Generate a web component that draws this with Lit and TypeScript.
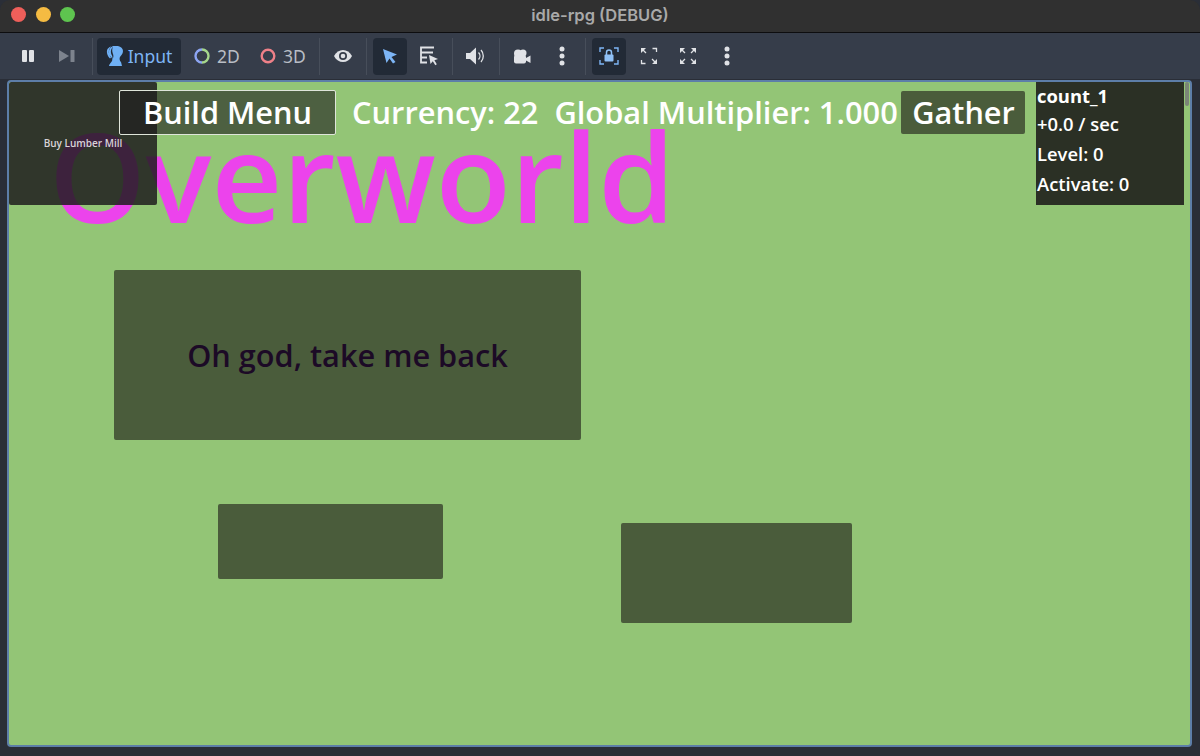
import { css, html, LitElement } from 'lit';
import { customElement } from 'lit/decorators.js';

@customElement('app-root')
export class AppRoot extends LitElement {
  static override styles = css`
    :host {
      display: block;
      width: 1200px;
      height: 756px;
      background: #2a2e37;
      overflow: hidden;
      font-family: 'Noto Sans', sans-serif;
    }
    .window {
      display: flex;
      flex-direction: column;
      height: 756px;
      border-radius: 10px 10px 0 0;
      overflow: hidden;
    }
    .titlebar {
      position: relative;
      flex: none;
      height: 32px;
      background: #303030;
      border-bottom: 1px solid #0d0d0f;
      display: flex;
      align-items: center;
      justify-content: center;
    }
    .lights {
      position: absolute;
      left: 11px;
      top: 7px;
      display: flex;
      gap: 9.5px;
    }
    .light {
      width: 15px;
      height: 15px;
      border-radius: 50%;
    }
    .red { background: #ee5f5a; }
    .yellow { background: #f5bb42; }
    .green { background: #5ec44f; }
    .title {
      font-family: Inter, 'Liberation Sans', sans-serif;
      font-size: 16.5px;
      font-weight: 600;
      color: #a9a9a9;
      margin-top: -3px;
    }
    .toolbar {
      flex: none;
      height: 46px;
      background: #363d4a;
      display: flex;
      align-items: center;
      padding-left: 9px;
      box-sizing: border-box;
    }
    .tool {
      flex: none;
      height: 37px;
      display: flex;
      align-items: center;
      justify-content: center;
      gap: 6px;
      border-radius: 4px;
      font-size: 17.5px;
      color: #b9bdc5;
    }
    .tool.on { background: #222a36; }
    .tool.blue { color: #7db5f5; }
    .tool svg { display: block; }
    .sep {
      flex: none;
      width: 1px;
      height: 37px;
      background: #474e5a;
    }
    .viewport-wrap {
      flex: 1;
      padding: 1px 8px 8px 7px;
      min-height: 0;
    }
    .viewport {
      position: relative;
      height: 663px;
      background: #93c576;
      border: 2px solid #5d7ea8;
      border-radius: 4px;
      overflow: hidden;
      font-family: 'Open Sans', 'Noto Sans', sans-serif;
      font-weight: 600;
    }
    /* game nodes sit on a free canvas, so they keep their own coordinates */
    .node {
      position: absolute;
      box-sizing: border-box;
    }
    .overworld {
      left: 40px;
      top: 11px;
      font-size: 123px;
      line-height: 165px;
      color: #ec43ec;
      white-space: nowrap;
    }
    .block {
      background: #4a5c3b;
      border-radius: 2px;
    }
    .back {
      display: flex;
      align-items: center;
      justify-content: center;
      font-size: 30.7px;
      color: #1c0a26;
    }
    .panel {
      background: rgba(30, 28, 30, 0.85);
      border-radius: 2px;
    }
    .buy {
      left: 0;
      top: 0;
      width: 148px;
      height: 123px;
      color: #d8d4d8;
      font-size: 10px;
      text-align: center;
      line-height: 14px;
      padding-top: 54px;
    }
    .btn {
      display: flex;
      align-items: center;
      justify-content: center;
      color: #fff;
      font-size: 30.7px;
      padding-bottom: 1px;
      background: rgba(30, 28, 30, 0.6);
      border-radius: 2px;
    }
    .build {
      left: 110px;
      top: 8px;
      width: 217px;
      height: 45px;
      border: 1.5px solid #dfe5da;
    }
    .gather {
      left: 892px;
      top: 9px;
      width: 124px;
      height: 43px;
      padding-left: 1px;
      background: #4a5c3b;
    }
    .label {
      left: 343px;
      top: 9px;
      font-size: 30.8px;
      line-height: 43px;
      color: #fff;
      white-space: pre;
    }
    .stats {
      left: 1027px;
      top: 0;
      width: 148px;
      height: 123px;
      background: #2b3025;
      color: #fff;
      font-size: 18.4px;
      line-height: 30px;
      padding-left: 1px;
    }
    .stats b { font-weight: 700; line-height: 27px; display: block; }
    .stats div { white-space: nowrap; }
    .scroll {
      position: absolute;
      right: 1px;
      top: 0;
      width: 4px;
      height: 24px;
      background: #7b8578;
      border-radius: 2px;
    }
  `;

  override render() {
    return html`
      <div class="window">
        <div class="titlebar">
          <div class="lights">
            <span class="light red"></span><span class="light yellow"></span><span class="light green"></span>
          </div>
          <div class="title">idle-rpg (DEBUG)</div>
        </div>
        <div class="toolbar">
          <div class="tool" style="width:38px">
            <svg width="14" height="14" viewBox="0 0 14 14" fill="#e0e2e6"><rect x="1" y="1" width="5" height="12" rx="1"/><rect x="8" y="1" width="5" height="12" rx="1"/></svg>
          </div>
          <div class="tool" style="width:40px">
            <svg width="16" height="14" viewBox="0 0 16 14" fill="#7d838d"><path d="M0 1l10 6-10 6z"/><rect x="11.500" y="1" width="4" height="12" rx="0.5"/></svg>
          </div>
          <div class="sep" style="margin:0 4px 0 5px"></div>
          <div class="tool on blue" style="width:84px;gap:5px">
            <svg width="17" height="20" viewBox="0 0 17 20" fill="#6fb0f5"><path d="M7 0c5-1 10 1 10 5 0 3-2 4-3 6-1 2 0 4 1 5l1 4H3c0-2 2-3 3-5 1-3-1-4-3-6C2 5 4 1 7 0z"/><path d="M1.500 3C3 1.500 4 .5 5 .5 3 3 2 6 3.500 9l1.500 2.500-1 1C1.500 10 0 6 1.500 3z"/><path d="M7 .5C5 3 4 6 6 9.500c.5 1 .5 2.500.2 4C8 11 7.500 9 6.800 7.500 6 5 6 3 7 .5z" fill="#222a36"/></svg>
            <span>Input</span>
          </div>
          <div class="tool" style="width:60px;margin-left:6px;gap:7px">
            <svg width="16" height="16" viewBox="0 0 16 16" fill="none" stroke-width="2.400"><path d="M8 1.500a6.500 6.500 0 0 1 0 13" stroke="#a5d68b"/><path d="M8 14.500a6.500 6.500 0 0 1 0-13" stroke="#8da5f3"/></svg>
            <span>2D</span>
          </div>
          <div class="tool" style="width:60px;margin-left:6px;gap:7px">
            <svg width="16" height="16" viewBox="0 0 16 16" fill="none"><circle cx="8" cy="8" r="6.300" stroke="#ee8088" stroke-width="2.400"/></svg>
            <span>3D</span>
          </div>
          <div class="sep" style="margin:0 3px 0 6px"></div>
          <div class="tool" style="width:40px">
            <svg width="20" height="14" viewBox="0 0 20 14"><path d="M1 7c2-4 5.500-6 9-6s7 2 9 6c-2 4-5.500 6-9 6s-7-2-9-6z" fill="#e0e2e6"/><circle cx="10" cy="7" r="4" fill="#363d4a"/><circle cx="10" cy="7" r="2.300" fill="#e0e2e6"/></svg>
          </div>
          <div class="sep" style="margin:0 6px 0 3px"></div>
          <div class="tool on" style="width:34px">
            <svg width="16" height="16" viewBox="0 0 16 16" fill="#7db5f5"><path d="M1 1l14 5.500-5.500 2.500L13.500 14l-2.500 1.500-3.500-5L4.500 15z"/></svg>
          </div>
          <div class="tool" style="width:38px;margin-left:3px">
            <svg width="20" height="20" viewBox="0 0 20 20" fill="none" stroke="#e0e2e6" stroke-width="1.800"><path d="M15 1.500H2v15h6M2 6.500h12M2 11.500h6"/><path d="M10 9l9 4-3.600 1.300 2.400 4-1.500.9-2.500-3.900-2.300 2.800z" fill="#e0e2e6" stroke="none"/></svg>
          </div>
          <div class="sep" style="margin:0 5px 0 4px"></div>
          <div class="tool" style="width:36px">
            <svg width="20" height="18" viewBox="0 0 20 18" fill="none"><path d="M0 6h4l6-5.500v17L4 12H0z" fill="#e0e2e6"/><path d="M12.500 5.500a5 5 0 0 1 0 7M15 3a9 9 0 0 1 0 12" stroke="#e0e2e6" stroke-width="1.300"/></svg>
          </div>
          <div class="sep" style="margin:0 5px 0 5px"></div>
          <div class="tool" style="width:34px">
            <svg width="18" height="15" viewBox="0 0 18 15" fill="#e0e2e6"><circle cx="5" cy="4.500" r="4"/><circle cx="10" cy="4" r="3.500"/><rect x="1" y="6" width="12" height="8.500" rx="2"/><path d="M13 9l4.500-2.500v7.500L13 11.500z"/></svg>
          </div>
          <div class="tool" style="width:38px;margin-left:4px">
            <svg width="6" height="20" viewBox="0 0 6 20" fill="#e0e2e6"><circle cx="3" cy="3" r="2.500"/><circle cx="3" cy="10" r="2.500"/><circle cx="3" cy="17" r="2.500"/></svg>
          </div>
          <div class="sep" style="margin:0 6px 0 4px"></div>
          <div class="tool on" style="width:34px">
            <svg width="20" height="20" viewBox="0 0 20 20" fill="none"><path d="M1 6V2h4M15 2h4v4M1 14v4h4M15 18h4v-4" stroke="#7db5f5" stroke-width="1.400"/><rect x="5.500" y="8.500" width="9" height="7" rx="1" fill="#8fc0f5"/><path d="M7.500 9V6.500a2.500 2.500 0 0 1 5 0V9" stroke="#8fc0f5" stroke-width="1.500"/></svg>
          </div>
          <div class="tool" style="width:38px;margin-left:4px">
            <svg width="18" height="18" viewBox="0 0 18 18" fill="none" stroke="#e0e2e6" stroke-width="1.300"><path d="M12.500 1.500h4v3.500M1.500 13v3.500h4"/><path d="M1 1h5L1 6zM17 17h-5l5-5z" fill="#e0e2e6" stroke="none"/><path d="M3 3l3 3M15 15l-3-3"/></svg>
          </div>
          <div class="tool" style="width:38px;margin-left:1px">
            <svg width="18" height="18" viewBox="0 0 18 18" fill="#e0e2e6" stroke="none"><path d="M1 1h5L1 6zM17 1v5l-5-5zM1 17v-5l5 5zM17 17h-5l5-5z"/><path d="M3 3l3 3M15 3l-3 3M3 15l3-3M15 15l-3-3" stroke="#e0e2e6" stroke-width="1.300"/></svg>
          </div>
          <div class="tool" style="width:38px;margin-left:1px">
            <svg width="6" height="20" viewBox="0 0 6 20" fill="#e0e2e6"><circle cx="3" cy="3" r="2.500"/><circle cx="3" cy="10" r="2.500"/><circle cx="3" cy="17" r="2.500"/></svg>
          </div>
        </div>
        <div class="viewport-wrap">
          <div class="viewport">
            <div class="node overworld">Overworld</div>
            <div class="node block back" style="left:105px;top:188px;width:467px;height:170px">Oh god, take me back</div>
            <div class="node block" style="left:209px;top:422px;width:225px;height:75px"></div>
            <div class="node block" style="left:612px;top:441px;width:231px;height:100px"></div>
            <div class="node panel buy">Buy Lumber Mill</div>
            <div class="node btn build">Build Menu</div>
            <div class="node label">Currency: 22  Global Multiplier: 1.000</div>
            <div class="node btn gather">Gather</div>
            <div class="node stats">
              <b>count_1</b>
              <div>+0.0 / sec</div>
              <div>Level: 0</div>
              <div>Activate: 0</div>
            </div>
            <div class="scroll"></div>
          </div>
        </div>
      </div>
    `;
  }
}
